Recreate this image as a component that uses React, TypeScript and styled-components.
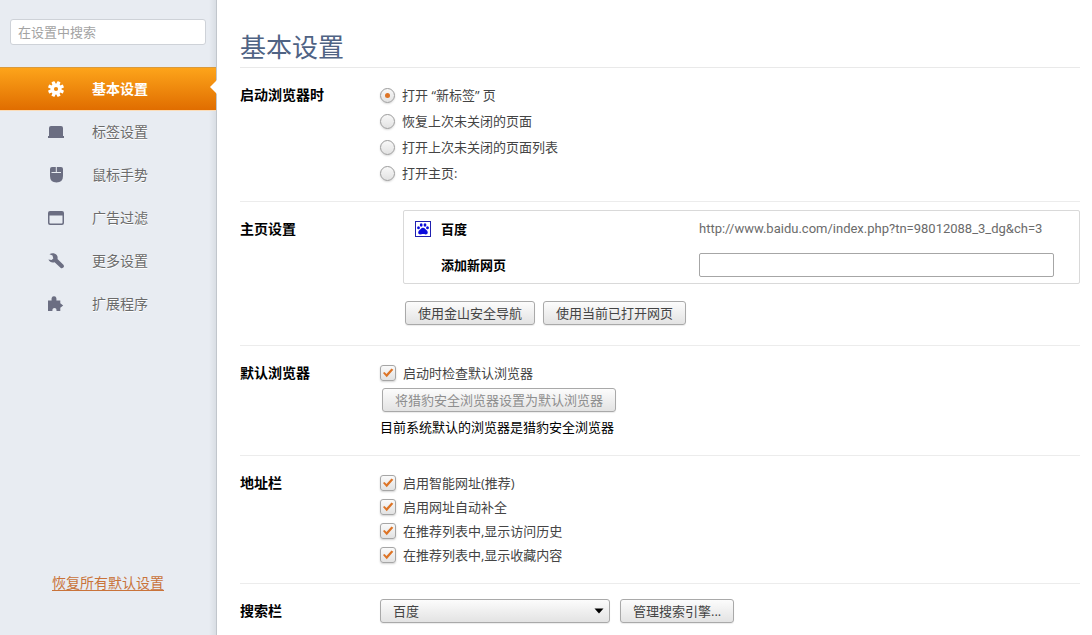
import React from "react";
import styled, { createGlobalStyle, css } from "styled-components";

const GlobalStyle = createGlobalStyle`
  *, *::before, *::after { box-sizing: border-box; }
  body {
    margin: 0;
    background: #fff;
    color: #444;
    font: 13px/24px "Open Sans", "Noto Sans CJK SC", sans-serif;
  }
  button, input, select { font: inherit; color: inherit; }
`;

const Page = styled.div`
  display: flex;
  min-height: 100vh;
`;

/* ---------- sidebar ---------- */

const Sidebar = styled.aside`
  flex: 0 0 217px;
  display: flex;
  flex-direction: column;
  border-right: 1px solid #c1c6cc;
  background: linear-gradient(to left, #d9dee4, rgba(232, 237, 242, 0) 7px), #e8ecf2;
`;

const SearchInput = styled.input`
  height: 26px;
  margin: 19px 10px 22px;
  padding: 0 7px;
  border: 1px solid #ced2d8;
  border-radius: 3px;
  background: #fff;
  outline: none;
  &::placeholder { color: #a3a3a3; opacity: 1; }
`;

const NavLink = styled.a<{ $active?: boolean }>`
  position: relative;
  display: flex;
  align-items: center;
  gap: 28px;
  height: 43px;
  padding-left: 48px;
  font-size: 14px;
  color: #6b6b6b;
  text-decoration: none;
  text-shadow: 0 1px 0 #fff;
  svg { flex: none; fill: #6b6e82; }
  ${(p) =>
    p.$active &&
    css`
      color: #fff;
      font-weight: 700;
      text-shadow: none;
      background: linear-gradient(#fda41a, #e06d00);
      border-top: 1px solid #d99a3c;
      box-shadow: 0 1px 0 #fbdcb8;
      svg { fill: #fff; }
      &::after {
        content: "";
        position: absolute;
        right: -1px;
        top: 12px;
        border: 7px solid transparent;
        border-left-width: 0;
        border-right-color: #fff;
      }
    `}
`;

const ResetLink = styled.a`
  align-self: center;
  margin-top: auto;
  margin-bottom: 40px;
  font-size: 14px;
  color: #c9733a;
  text-underline-offset: 2px;
`;

/* ---------- main column ---------- */

const Main = styled.main`
  flex: 1;
  min-width: 0;
  padding: 27px 12px 0 23px;
`;

const Title = styled.h1`
  margin: 0;
  height: 41px;
  border-bottom: 1px solid #e9e9e9;
  color: #4f6384;
  font-size: 26px;
  font-weight: 400;
  line-height: 40px;
`;

const SectionRow = styled.section`
  display: grid;
  grid-template-columns: 140px minmax(0, 1fr);
  border-bottom: 1px solid #ececec;
  &:last-child { border-bottom: 0; }
`;

const SectionTitle = styled.h2`
  margin: 15px 0 0;
  color: #000;
  font-size: 14px;
  font-weight: 700;
  line-height: 24px;
`;

const Stack = styled.div<{ $gap?: number; $last?: boolean }>`
  display: flex;
  flex-direction: column;
  align-items: flex-start;
  gap: ${(p) => p.$gap ?? 0}px;
  padding: 15px 0 ${(p) => (p.$last ? 12 : 16)}px;
`;

const HomeBody = styled.div`
  padding: 8px 0 20px 23px;
`;

const Option = styled.label`
  display: flex;
  align-items: center;
  gap: 7px;
  height: 24px;
`;

const Radio = styled.input`
  appearance: none;
  display: grid;
  place-items: center;
  width: 15px;
  height: 15px;
  margin: 0;
  border: 1px solid #9b9b9b;
  border-radius: 50%;
  background: linear-gradient(#f8f8f8, #e2e2e2);
  box-shadow: 0 1px 2px rgba(0, 0, 0, 0.15);
  &:checked::before {
    content: "";
    width: 5px;
    height: 5px;
    border-radius: 50%;
    background: #dd7426;
  }
`;

const Check = styled.input`
  appearance: none;
  width: 16px;
  height: 16px;
  margin: 0;
  border: 1px solid #a6a6a6;
  border-radius: 3px;
  background: linear-gradient(#fafafa, #e2e2e2);
  box-shadow: 0 1px 2px rgba(0, 0, 0, 0.18);
  &:checked::before {
    content: "";
    display: block;
    width: 14px;
    height: 14px;
    background: #dd7426;
    clip-path: polygon(14% 50%, 25% 42%, 39% 57%, 75% 18%, 88% 27%, 41% 80%);
  }
`;

const Button = styled.button`
  height: 24px;
  padding: 0 12px;
  border: 1px solid #a9a9a9;
  border-radius: 3px;
  background: linear-gradient(#fcfcfc, #e3e3e3);
  box-shadow: 0 1px 1px rgba(0, 0, 0, 0.08);
  color: #444;
  line-height: 22px;
  white-space: nowrap;
  &:disabled { color: #8e8e8e; }
`;

const ButtonRow = styled.div<{ $gap?: number }>`
  display: flex;
  gap: ${(p) => p.$gap ?? 8}px;
`;

const InsetRow = styled(ButtonRow)`
  padding-left: 2px;
`;

const Note = styled.p`
  margin: 0;
  color: #000;
`;

const PagePanel = styled.div`
  margin-bottom: 17px;
  height: 74px;
  padding: 0 25px 0 11px;
  border: 1px solid #d9d9d9;
  border-radius: 2px;
`;

const PageRow = styled.div`
  display: grid;
  grid-template-columns: 16px 248px minmax(0, 1fr);
  column-gap: 10px;
  align-items: center;
  height: 36px;
`;

const PageName = styled.label`
  grid-column: 2;
  color: #000;
  font-weight: 700;
`;

const PageUrl = styled.span`
  color: #6b6b6b;
  font-family: Roboto, sans-serif;
`;

const UrlInput = styled.input`
  width: 100%;
  height: 24px;
  padding: 0 6px;
  border: 1px solid #a6a6a6;
  border-radius: 2px;
  background: #fff;
`;

const SelectBox = styled.span`
  position: relative;
  display: block;
  width: 230px;
  svg {
    position: absolute;
    right: 6px;
    top: 9px;
    pointer-events: none;
  }
`;

const Select = styled.select`
  appearance: none;
  display: block;
  width: 100%;
  height: 24px;
  padding: 0 12px;
  border: 1px solid #a9a9a9;
  border-radius: 3px;
  background: linear-gradient(#fcfcfc, #e3e3e3);
  box-shadow: 0 1px 1px rgba(0, 0, 0, 0.08);
  line-height: 22px;
`;

/* ---------- icons ---------- */

const icons: Record<string, React.ReactNode> = {
  gear: (
    <>
      {[22.5, 67.5, 112.5, 157.5].map((a) => (
        <rect key={a} x="6.3" y="0" width="3.4" height="16" rx="0.8" transform={`rotate(${a} 8 8)`} />
      ))}
      <circle cx="8" cy="8" r="5.5" />
      <circle cx="8" cy="8" r="2.1" fill="#ef8a0e" />
    </>
  ),
  laptop: <path d="M3 2h10q2 0 2 2v8h1v2H0v-2h1V4q0-2 2-2z" />,
  mouse: (
    <path d="M4 0H7.800V5H3.500V6H13V5H8.800V0H13Q15 0 15 2V9Q15 15.500 8.500 15.500T2 9V2Q2 0 4 0z" />
  ),
  window: <path fillRule="evenodd" d="M2 1h12q2 0 2 2v10q0 2-2 2H2q-2 0-2-2V3q0-2 2-2zM1.500 5.500v7.200q0 .8.8.8h11.400q.8 0 .8-.8V5.500z" />,
  wrench: (
    <path d="M1.500 1.300C3.500-.4 7 0 8.700 2c1 1.300 1.100 2.700.8 4l5.900 5.800q1.200 1.400-.1 2.800-1.400 1.400-2.800.2L6.600 9.200C4.300 10 1.500 9.200.4 6.600l3.200.4 1.700-1.600-.8-2.900z" />
  ),
  puzzle: (
    <path d="M0 4.500h3.600C3.300 1.800 3.900.2 6 .2S8.800 1.800 8.400 4.500H12.300V7.300L15.200 9.500L12.300 11.800V15H8.500C8.700 13 8 12 6.500 12S4.200 13 4.400 15H0z" strokeLinejoin="round" />
  ),
};

const NavIcon = ({ name }: { name: string }) => (
  <svg width="16" height="16" viewBox="0 0 16 16" aria-hidden="true">
    {icons[name]}
  </svg>
);

const BaiduIcon = () => (
  <svg width="16" height="16" viewBox="0 0 16 16" aria-hidden="true">
    <rect x="0.5" y="0.5" width="15" height="15" fill="#fff" stroke="#2020b0" />
    <g fill="#0b0bdc">
      <ellipse cx="6.2" cy="4" rx="1.4" ry="1.8" />
      <ellipse cx="10" cy="4" rx="1.4" ry="1.8" />
      <ellipse cx="3.500" cy="6.700" rx="1.400" ry="1.500" />
      <ellipse cx="12.500" cy="6.700" rx="1.400" ry="1.500" />
      <path d="M8 6.700c1.900 0 2.400 1.600 3.600 2.500 1.700 1.300 1.600 4.200-.9 4.200-1.200 0-1.700-.3-2.700-.3s-1.500.3-2.700.3c-2.500 0-2.600-2.900-.9-4.200C5.600 8.300 6.100 6.700 8 6.700z" />
    </g>
  </svg>
);

/* ---------- page ---------- */

const nav = [
  ["gear", "基本设置"],
  ["laptop", "标签设置"],
  ["mouse", "鼠标手势"],
  ["window", "广告过滤"],
  ["wrench", "更多设置"],
  ["puzzle", "扩展程序"],
];

const startup = ["打开 “新标签” 页", "恢复上次未关闭的页面", "打开上次未关闭的页面列表", "打开主页:"];

const addressOptions = [
  "启用智能网址(推荐)",
  "启用网址自动补全",
  "在推荐列表中,显示访问历史",
  "在推荐列表中,显示收藏内容",
];

export default function App() {
  return (
    <Page>
      <GlobalStyle />
      <Sidebar>
        <SearchInput type="text" placeholder="在设置中搜索" aria-label="在设置中搜索" />
        <nav>
          {nav.map(([icon, text], i) => (
            <NavLink key={icon} href={`#${icon}`} $active={i === 0}>
              <NavIcon name={icon} />
              {text}
            </NavLink>
          ))}
        </nav>
        <ResetLink href="#reset">恢复所有默认设置</ResetLink>
      </Sidebar>

      <Main>
        <Title>基本设置</Title>
        <div>
          <SectionRow>
            <SectionTitle>启动浏览器时</SectionTitle>
            <Stack $gap={2}>
              {startup.map((text, i) => (
                <Option key={text}>
                  <Radio type="radio" name="startup" defaultChecked={i === 0} />
                  {text}
                </Option>
              ))}
            </Stack>
          </SectionRow>

          <SectionRow>
            <SectionTitle>主页设置</SectionTitle>
            <HomeBody>
              <PagePanel>
                <PageRow>
                  <BaiduIcon />
                  <PageName as="span">百度</PageName>
                  <PageUrl>http://www.baidu.com/index.php?tn=98012088_3_dg&amp;ch=3</PageUrl>
                </PageRow>
                <PageRow>
                  <PageName htmlFor="new-page">添加新网页</PageName>
                  <UrlInput id="new-page" type="text" />
                </PageRow>
              </PagePanel>
              <InsetRow>
                <Button type="button">使用金山安全导航</Button>
                <Button type="button">使用当前已打开网页</Button>
              </InsetRow>
            </HomeBody>
          </SectionRow>

          <SectionRow>
            <SectionTitle>默认浏览器</SectionTitle>
            <Stack $gap={3}>
              <Option>
                <Check type="checkbox" defaultChecked />
                启动时检查默认浏览器
              </Option>
              <InsetRow>
                <Button type="button" disabled>
                  将猎豹安全浏览器设置为默认浏览器
                </Button>
              </InsetRow>
              <Note>目前系统默认的浏览器是猎豹安全浏览器</Note>
            </Stack>
          </SectionRow>

          <SectionRow>
            <SectionTitle>地址栏</SectionTitle>
            <Stack>
              {addressOptions.map((text) => (
                <Option key={text}>
                  <Check type="checkbox" defaultChecked />
                  {text}
                </Option>
              ))}
            </Stack>
          </SectionRow>

          <SectionRow>
            <SectionTitle>搜索栏</SectionTitle>
            <Stack $last>
              <ButtonRow $gap={10}>
                <SelectBox>
                  <Select aria-label="搜索栏" defaultValue="baidu">
                    <option value="baidu">百度</option>
                  </Select>
                  <svg width="10" height="6" viewBox="0 0 10 6" aria-hidden="true">
                    <path d="M0.5 0.5h9L5 5.5z" fill="#000" />
                  </svg>
                </SelectBox>
                <Button type="button">管理搜索引擎...</Button>
              </ButtonRow>
            </Stack>
          </SectionRow>
        </div>
      </Main>
    </Page>
  );
}
